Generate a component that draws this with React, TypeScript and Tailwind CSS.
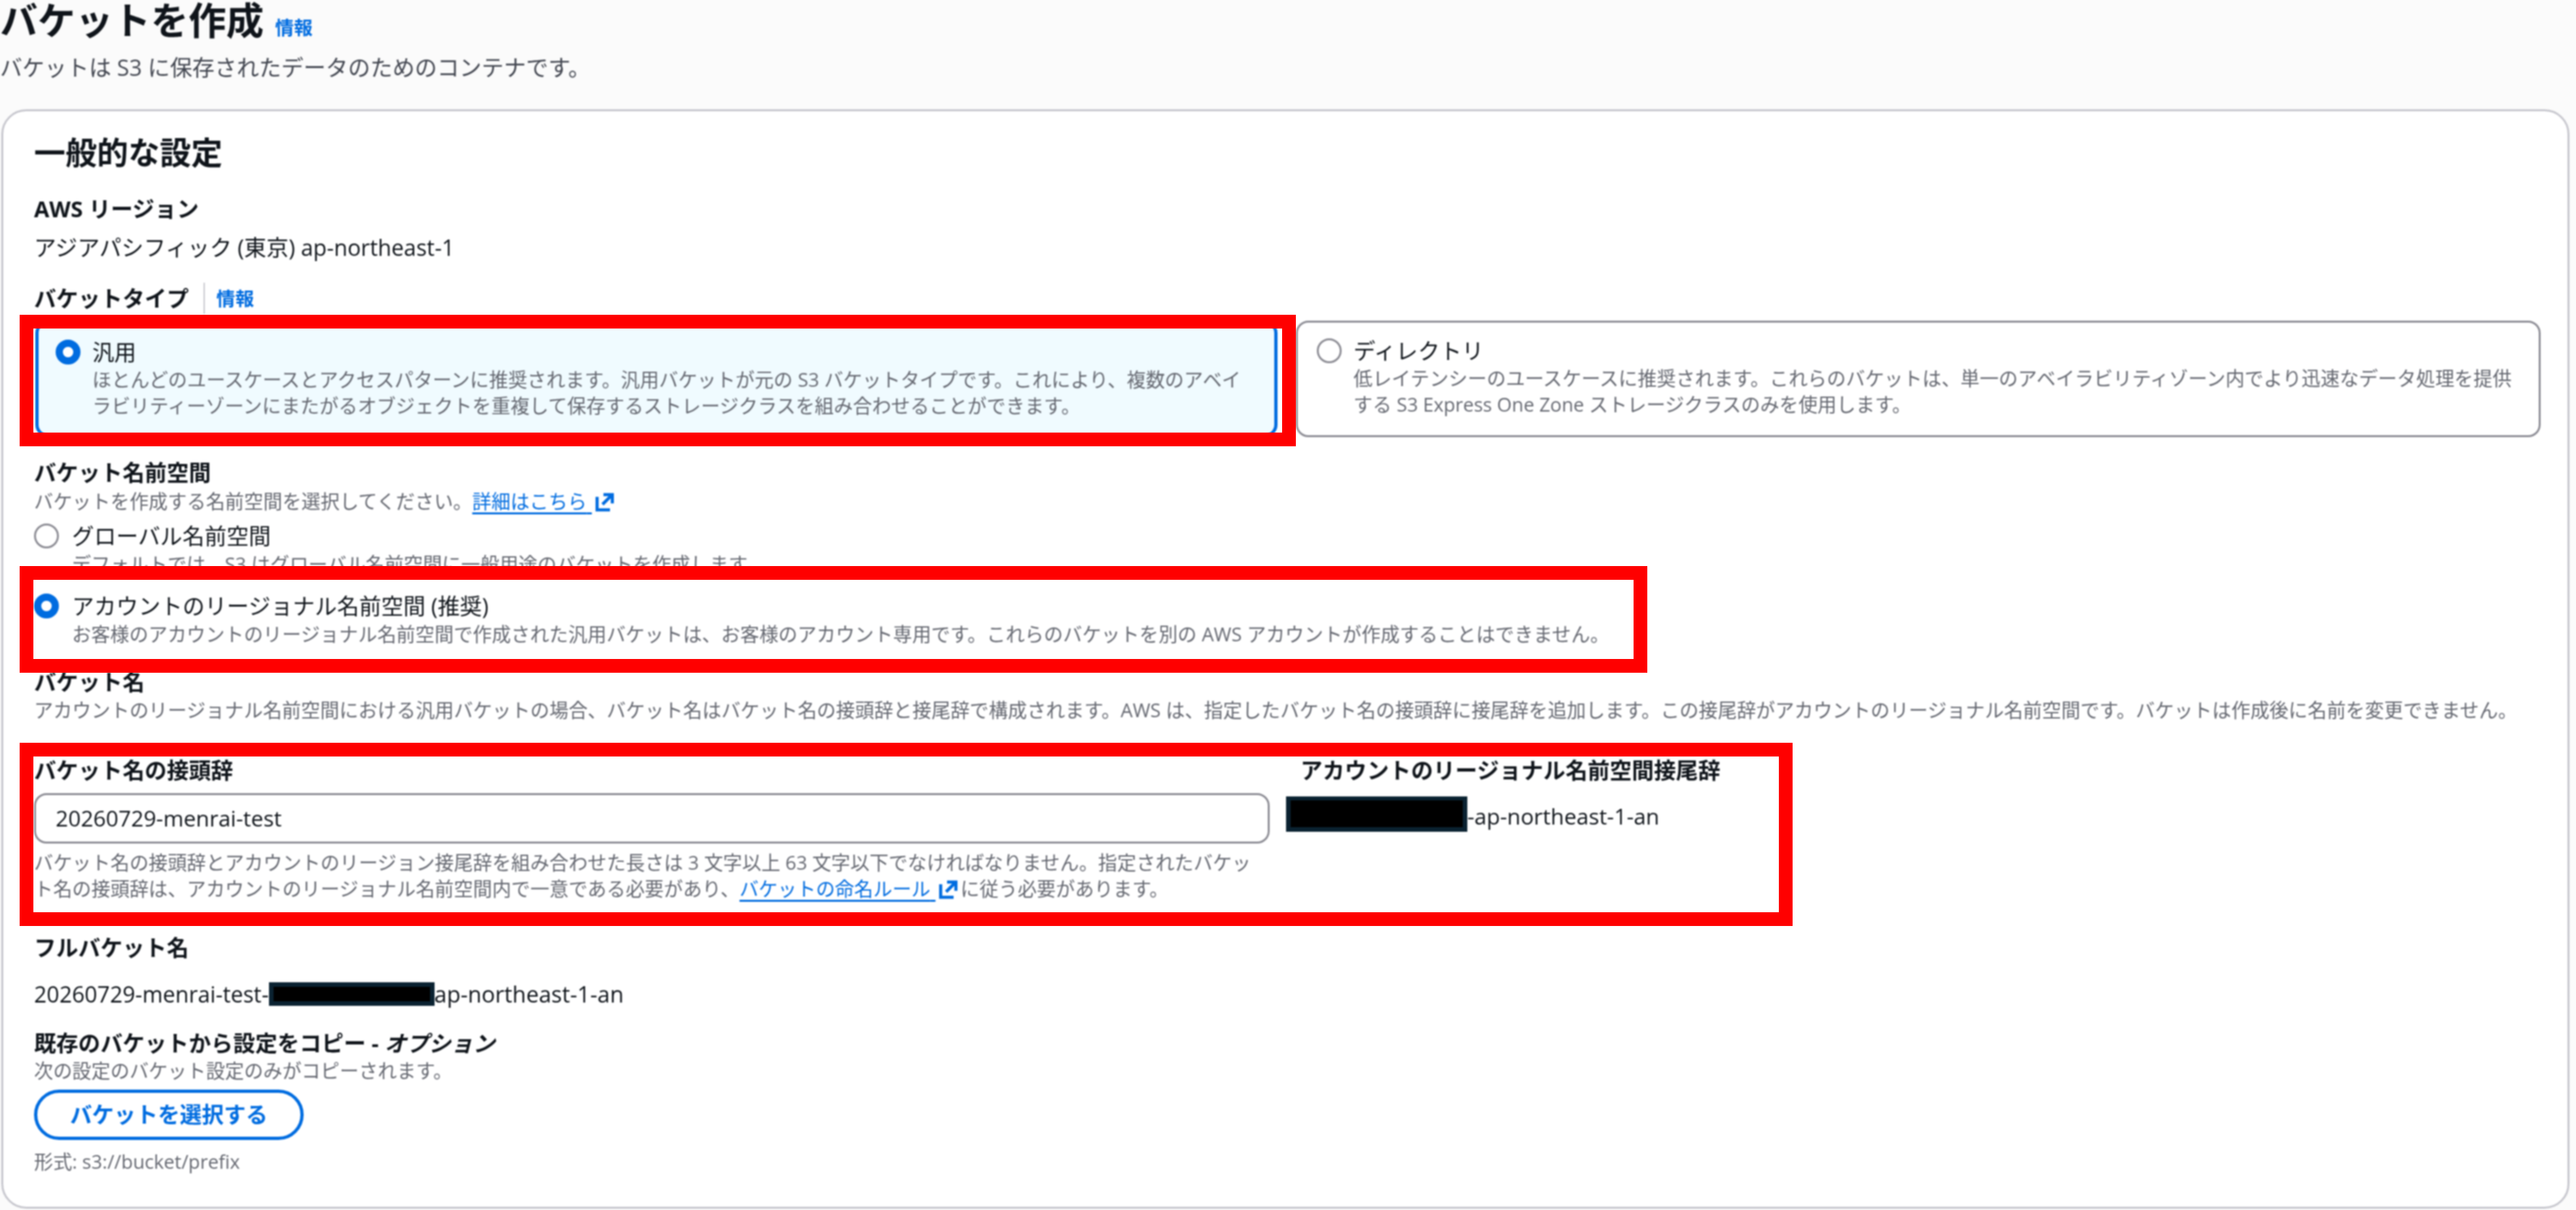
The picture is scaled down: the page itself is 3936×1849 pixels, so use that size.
const FONT = 'font-["Open_Sans","Noto_Sans_CJK_JP",sans-serif]'

function ExternalIcon() {
  return (
    <svg viewBox="0 0 16 16" className="w-[38px] h-[38px] inline-block -my-[6px] align-[-6px] fill-none stroke-[#006ce0] stroke-2">
      <path d="M3.5 3.5V11.8H11.8" />
      <path d="M7.6 2H13.3V7.7M13.3 2L7 8.3" />
    </svg>
  )
}

function Radio({ checked }: { checked?: boolean }) {
  return checked ? (
    <span className="block w-[38px] h-[38px] shrink-0 rounded-full border-[11px] border-[#006ce0] bg-white" />
  ) : (
    <span className="block w-[38px] h-[38px] shrink-0 rounded-full border-[3px] border-[#8c8c94] bg-white" />
  )
}

function Label({ children, className = '' }: { children: React.ReactNode; className?: string }) {
  return <div className={`text-[33.8px] leading-[38px] font-bold text-[#0f141a] ${className}`}>{children}</div>
}

function Hint({ children, className = '' }: { children: React.ReactNode; className?: string }) {
  return <div className={`text-[29.2px] leading-[40px] text-[#656871] ${className}`}>{children}</div>
}

function DocLink({ children }: { children: React.ReactNode }) {
  return (
    <>
      <a className="text-[#006ce0] underline decoration-[3px] underline-offset-[6px]">{children}{' '}</a>
      <ExternalIcon />
    </>
  )
}

function Redacted({ className }: { className: string }) {
  return <span className={`block shrink-0 bg-black border-[#0a2231] border-x-[7px] ${className}`} />
}

function TypeTile({ selected, title, lines }: { selected?: boolean; title: string; lines: string[] }) {
  return (
    <div className={`h-[178px] rounded-[19px] flex items-start gap-[18px] pt-[24px] ${selected ? 'ml-[2px] bg-[#f0fbff] border-[5px] pl-[26px] border-[#006ce0]' : '-ml-[2px] bg-white border-[3px] pl-[29px] border-[#8c8c94]'}`}>
      <Radio checked={selected} />
      <div>
        <div className="text-[33.6px] leading-[38px] text-[#0f141a]">{title}</div>
        <Hint className={`mt-[3px] whitespace-nowrap ${selected ? 'text-[28.8px]' : ''}`}>
          {lines.map(l => <div key={l}>{l}</div>)}
        </Hint>
      </div>
    </div>
  )
}

export default function App() {
  return (
    <div className={`relative w-[3936px] h-[1849px] overflow-hidden bg-[#fbfbfb] ${FONT}`}>
      <div className="blur-[0.8px]">
        <div className="flex items-baseline gap-[17px] h-[62px]">
          <h1 className="text-[57.6px] leading-[62px] font-bold text-[#0f141a]">バケットを作成</h1>
          <a className="text-[28.8px] font-bold text-[#006ce0]">情報</a>
        </div>
        <p className="mt-[22px] text-[34px] leading-[38px] text-[#424650]">バケットは S3 に保存されたデータのためのコンテナです。</p>

        <section className="mt-[45px] ml-[2px] w-[3924px] h-[1680px] bg-white border-[3px] border-[#c6c6cd] rounded-[38px] pl-[47px] pr-[41px] pt-[35px]">
          <h2 className="text-[48px] leading-[56px] font-bold text-[#0f141a]">一般的な設定</h2>

          <Label className="mt-[39px]">AWS リージョン</Label>
          <div className="mt-[21px] text-[33.9px] leading-[38px] text-[#0f141a]">アジアパシフィック (東京) ap-northeast-1</div>

          <div className="mt-[35px] flex items-center h-[48px]">
            <Label>バケットタイプ</Label>
            <span className="ml-[22px] w-[2px] h-[48px] bg-[#c6c6cd]" />
            <a className="ml-[18px] text-[28.8px] font-bold text-[#006ce0]">情報</a>
          </div>
          <div className="mt-[10px] grid grid-cols-2 gap-[30px]">
            <TypeTile
              selected
              title="汎用"
              lines={[
                'ほとんどのユースケースとアクセスパターンに推奨されます。汎用バケットが元の S3 バケットタイプです。これにより、複数のアベイ',
                'ラビリティーゾーンにまたがるオブジェクトを重複して保存するストレージクラスを組み合わせることができます。',
              ]}
            />
            <TypeTile
              title="ディレクトリ"
              lines={[
                '低レイテンシーのユースケースに推奨されます。これらのバケットは、単一のアベイラビリティゾーン内でより迅速なデータ処理を提供',
                'する S3 Express One Zone ストレージクラスのみを使用します。',
              ]}
            />
          </div>

          <Label className="mt-[35px]">バケット名前空間</Label>
          <Hint className="mt-[5px]">
            バケットを作成する名前空間を選択してください。<DocLink>詳細はこちら</DocLink>
          </Hint>

          <div className="mt-[14px] flex items-start gap-[20px]">
            <Radio />
            <div>
              <div className="text-[33.8px] leading-[38px] text-[#0f141a]">グローバル名前空間</div>
              <Hint className="mt-[4px]">デフォルトでは、S3 はグローバル名前空間に一般用途のバケットを作成します。</Hint>
            </div>
          </div>
          <div className="mt-[25px] flex items-start gap-[20px]">
            <Radio checked />
            <div>
              <div className="text-[33.8px] leading-[38px] text-[#0f141a]">アカウントのリージョナル名前空間 (推奨)</div>
              <Hint className="mt-[4px]">お客様のアカウントのリージョナル名前空間で作成された汎用バケットは、お客様のアカウント専用です。これらのバケットを別の AWS アカウントが作成することはできません。</Hint>
            </div>
          </div>

          <Label className="mt-[34px]">バケット名</Label>
          <Hint className="mt-[4px]">アカウントのリージョナル名前空間における汎用バケットの場合、バケット名はバケット名の接頭辞と接尾辞で構成されます。AWS は、指定したバケット名の接頭辞に接尾辞を追加します。この接尾辞がアカウントのリージョナル名前空間です。バケットは作成後に名前を変更できません。</Hint>

          <div className="mt-[53px] flex items-start gap-[47px]">
            <div className="w-[1888px] shrink-0">
              <Label>バケット名の接頭辞</Label>
              <div className="mt-[16px] h-[77px] rounded-[19px] border-[3px] border-[#8c8c94] bg-white pl-[30px] flex items-center text-[33.6px] text-[#0f141a]">20260729-menrai-test</div>
              <Hint className="mt-[9px] leading-[39px]">
                <div className="whitespace-nowrap">バケット名の接頭辞とアカウントのリージョン接尾辞を組み合わせた長さは 3 文字以上 63 文字以下でなければなりません。指定されたバケッ</div>
                <div className="whitespace-nowrap">ト名の接頭辞は、アカウントのリージョナル名前空間内で一意である必要があり、<DocLink>バケットの命名ルール</DocLink>に従う必要があります。</div>
              </Hint>
            </div>
            <div>
              <Label>アカウントのリージョナル名前空間接尾辞</Label>
              <div className="mt-[21px] -ml-[22px] flex items-start">
                <Redacted className="w-[277px] h-[54px] border-t-[6px] border-b-[7px]" />
                <span className="mt-[11px] text-[33.6px] leading-[38px] text-[#0f141a]">-ap-northeast-1-an</span>
              </div>
            </div>
          </div>

          <Label className="mt-[51px]">フルバケット名</Label>
          <div className="mt-[33px] flex items-center h-[38px] text-[33.8px] text-[#0f141a]">
            <span>20260729-menrai-test-</span>
            <Redacted className="w-[253px] h-[36px] border-y-[7px]" />
            <span className="text-[34.4px]">ap-northeast-1-an</span>
          </div>

          <Label className="mt-[37px]">既存のバケットから設定をコピー - <i>オプション</i></Label>
          <Hint className="mt-[3px]">次の設定のバケット設定のみがコピーされます。</Hint>
          <button className="mt-[9px] block w-[412px] h-[77px] rounded-full border-[5px] border-[#006ce0] bg-white text-[33.6px] font-bold text-[#006ce0]">バケットを選択する</button>
          <Hint className="mt-[13px]">形式: s3://bucket/prefix</Hint>
        </section>
      </div>

      {/* 赤枠 (annotation) */}
      <div className="absolute left-[30px] top-[481px] w-[1950px] h-[201px] border-[21px] border-[#ff0000]" />
      <div className="absolute left-[30px] top-[865px] w-[2487px] h-[163px] border-[21px] border-[#ff0000]" />
      <div className="absolute left-[30px] top-[1135px] w-[2709px] h-[280px] border-[21px] border-[#ff0000]" />
    </div>
  )
}
